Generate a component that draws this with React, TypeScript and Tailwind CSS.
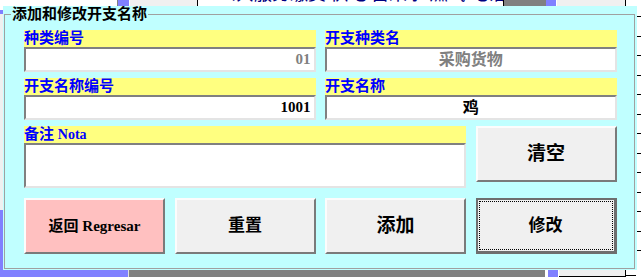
import React from 'react';

const FONT = "font-['Liberation_Serif','Noto_Sans_CJK_SC',serif]";

const Label: React.FC<{ children: React.ReactNode }> = ({ children }) => (
    <div className="h-[17px] bg-[#ffff80] text-[#0000ff] text-[15px] leading-[17px] font-bold whitespace-nowrap overflow-hidden">
        {children}
    </div>
);

const Field: React.FC<{ value: string; align: 'right' | 'center'; muted?: boolean; size?: string }> = ({ value, align, muted, size }) => (
    <div
        className={`h-[25px] border-2 border-t-[#808080] border-l-[#808080] border-b-[#e4e4e4] border-r-[#e4e4e4] bg-white flex items-center font-bold ${
            align === 'right' ? 'justify-end pr-[3px]' : 'justify-center'
        } ${muted ? 'text-[#808080]' : 'text-black'} ${size ?? 'text-[15px]'}`}
    >
        {value}
    </div>
);

const Button: React.FC<{ children: React.ReactNode; pink?: boolean; className?: string }> = ({ children, pink, className }) => (
    <button
        className={`w-full h-[56px] border-2 border-t-[#fcfcfc] border-l-[#fcfcfc] border-b-[#7a7a7a] border-r-[#7a7a7a] flex items-center justify-center font-bold text-black ${
            pink ? 'bg-[#ffc0c0]' : 'bg-[#f0f0f0]'
        } ${className ?? ''}`}
    >
        {children}
    </button>
);

const Tick = () => <div className="h-px w-[4px] bg-black mb-[19px]" />;

export default function App() {
    return (
        <div className={`w-[641px] h-[277px] overflow-hidden bg-white flex flex-col ${FONT}`}>
            {/* window behind, top edge */}
            <div className="h-[6px] flex overflow-hidden shrink-0">
                <div className="w-[117px] bg-white" />
                <div className="w-px bg-[#808080]" />
                <div className="w-[11px] bg-[#8080ff]" />
                <div className="w-px bg-white" />
                <div className="w-[67px] bg-[#f0f0f0] pl-[18px] text-[16px] leading-[20px] -mt-[15px] h-[21px] text-[#000080]">02</div>
                <div className="w-px bg-black" />
                <div className="w-[305px] bg-white pl-[20px] text-[18px] leading-[20px] -mt-[16px] h-[22px] text-[#000080] whitespace-nowrap overflow-hidden">
                    公共服务缴费&nbsp;供电 自来水 燃气 电话
                </div>
                <div className="w-px bg-black" />
                <div className="w-[42px] bg-[#808080]" />
                <div className="w-[10px] bg-[#8080ff]" />
                <div className="w-px bg-white" />
                <div className="w-[68px] bg-[#f0f0f0] text-center text-[16px] leading-[20px] -mt-[15px] h-[21px] text-[#000080]">1002</div>
                <div className="w-px bg-black" />
                <div className="flex-1 bg-white" />
            </div>

            <div className="h-[264px] flex shrink-0">
                <div className="w-[3px] flex flex-col bg-[#f0f0f0]">
                    <div className="h-[4px] bg-white" />
                    <div className="h-[4px] bg-[#8080ff]" />
                    <div className="flex-1" />
                    <div className="h-[60px] bg-[#8080ff]" />
                </div>

                <div className="w-[634px] bg-[#c0ffff] flex flex-col">
                    <fieldset className="ml-[1px] mr-[2px] mb-[1px] flex-1 min-w-0 border border-[#a0a0a0]">
                        <legend className="ml-[6px] px-[1px] text-[15px] leading-[17px] font-bold text-black">添加和修改开支名称</legend>
                        <div className="pt-[7px] pl-[19px] grid grid-cols-[141px_141px_141px_141px] grid-rows-[42px_42px_62px_60px] gap-x-[9.5px] gap-y-[6px]">
                            <div className="col-span-2 flex flex-col">
                                <Label>种类编号</Label>
                                <Field value="01" align="right" muted />
                            </div>
                            <div className="col-span-2 flex flex-col">
                                <Label>开支种类名</Label>
                                <Field value="采购货物" align="center" muted size="text-[16px]" />
                            </div>

                            <div className="col-span-2 flex flex-col">
                                <Label>开支名称编号</Label>
                                <Field value="1001" align="right" />
                            </div>
                            <div className="col-span-2 flex flex-col">
                                <Label>开支名称</Label>
                                <Field value="鸡" align="center" size="text-[16px]" />
                            </div>

                            <div className="col-span-3 flex flex-col">
                                <Label>
                                    备注 <span className="text-[14px]">Nota</span>
                                </Label>
                                <div className="h-[45px] border-2 border-t-[#808080] border-l-[#808080] border-b-[#e4e4e4] border-r-[#e4e4e4] bg-white" />
                            </div>
                            <div className="self-start">
                                <Button className="text-[19px]">清空</Button>
                            </div>

                            <div className="self-end">
                                <Button pink className="text-[15px]">返回 Regresar</Button>
                            </div>
                            <div className="self-end">
                                <Button className="text-[17px]">重置</Button>
                            </div>
                            <div className="self-end">
                                <Button className="text-[19px]">添加</Button>
                            </div>
                            <div className="self-end">
                                <button className="w-full h-[56px] border-2 border-[#6e6e6e] border-b-[3px] border-r-[3px] bg-[#f0f0f0] p-[1px] flex">
                                    <span className="flex-1 border border-dotted border-black flex items-center justify-center text-[17px] font-bold text-black">修改</span>
                                </button>
                            </div>
                        </div>
                    </fieldset>
                </div>

                <div className="w-[4px] bg-white flex flex-col pt-[10px]">
                    {Array.from({ length: 13 }).map((_, i) => (
                        <Tick key={i} />
                    ))}
                </div>
            </div>

            {/* window behind, bottom edge */}
            <div className="h-[7px] flex shrink-0">
                <div className="w-[128px] bg-[#8080ff]" />
                <div className="w-px bg-[#e0e0e0]" />
                <div className="w-[416px] bg-[#808080]" />
                <div className="w-[3px] bg-white" />
                <div className="w-[10px] bg-[#8080ff]" />
                <div className="w-px bg-white" />
                <div className="w-[66px] bg-[#f0f0f0] border-b border-black" />
                <div className="w-px bg-black" />
                <div className="flex-1 bg-white flex items-end">
                    <div className="h-px w-[10px] bg-black mb-[1px]" />
                </div>
            </div>
        </div>
    );
}
